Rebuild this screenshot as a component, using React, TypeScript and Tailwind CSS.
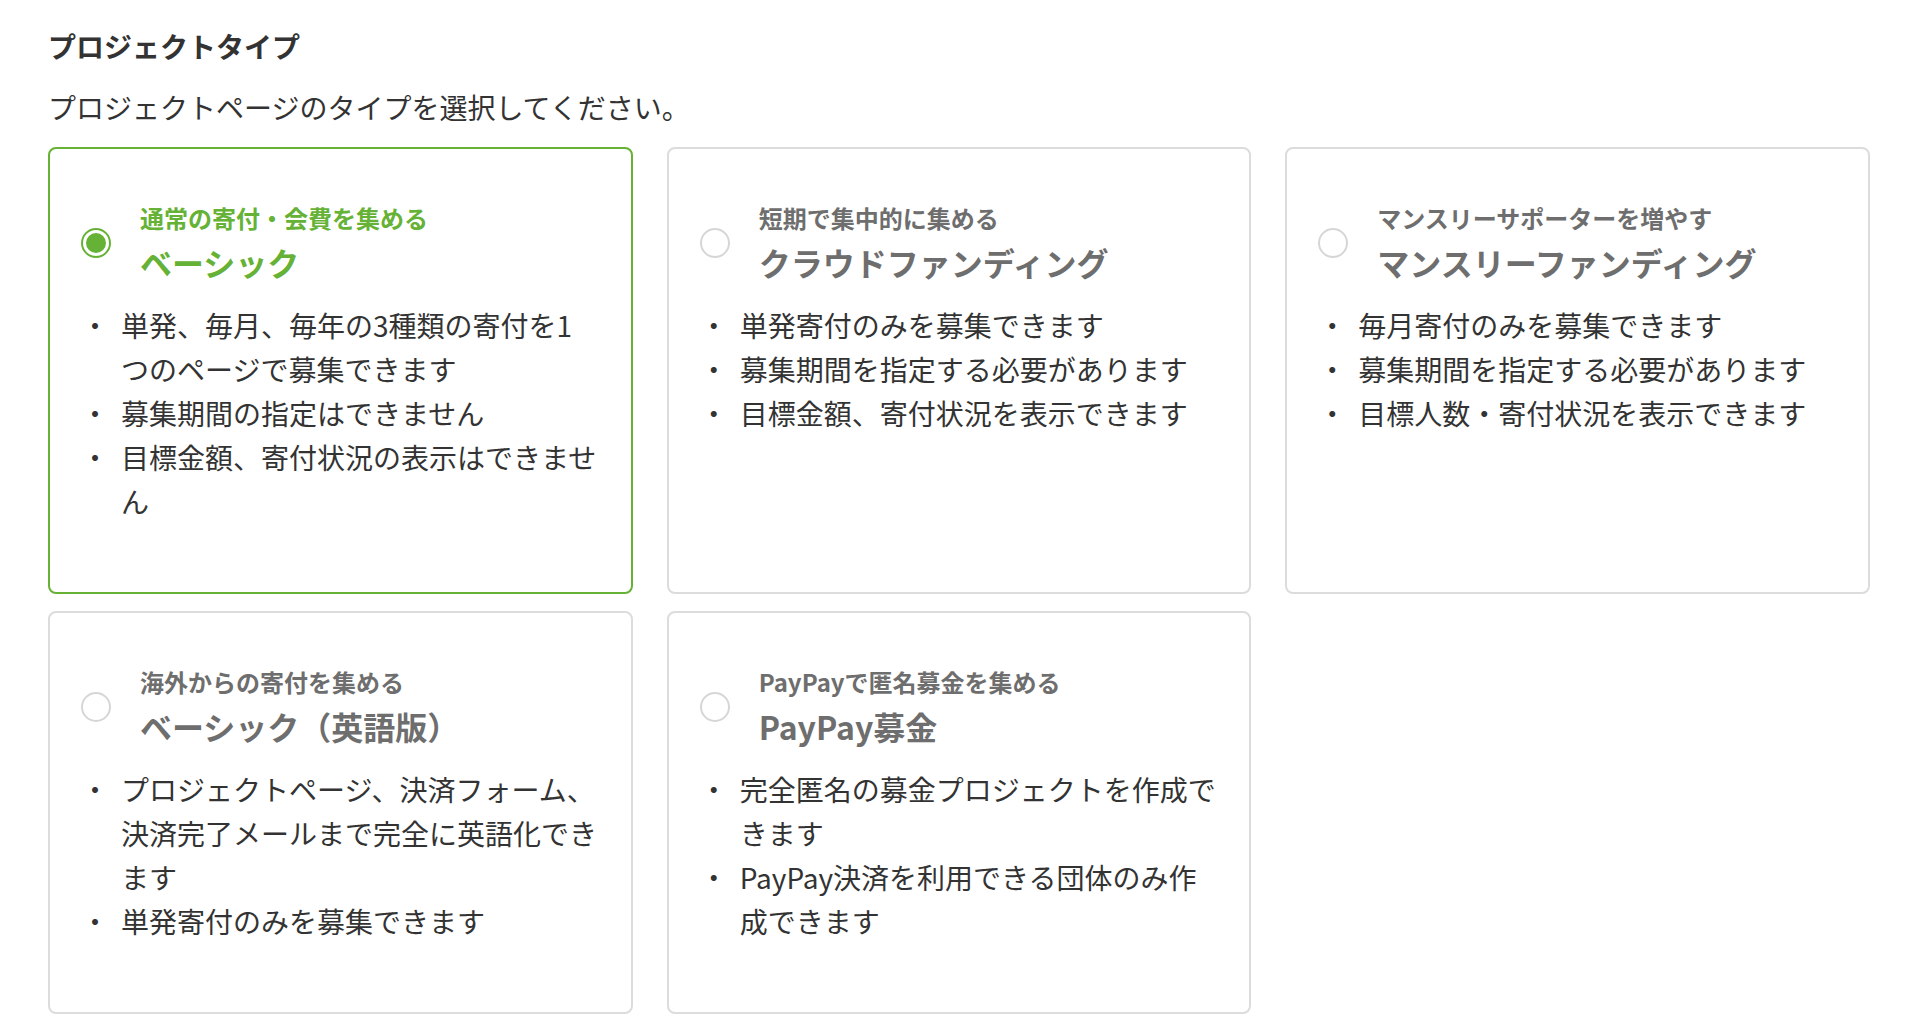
import { useState } from 'react'

type ProjectType = {
  id: string
  lead: string
  title: string
  points: string[]
}

const TYPES: ProjectType[] = [
  {
    id: 'basic',
    lead: '通常の寄付・会費を集める',
    title: 'ベーシック',
    points: [
      '単発、毎月、毎年の3種類の寄付を1\nつのページで募集できます',
      '募集期間の指定はできません',
      '目標金額、寄付状況の表示はできませ\nん',
    ],
  },
  {
    id: 'crowdfunding',
    lead: '短期で集中的に集める',
    title: 'クラウドファンディング',
    points: ['単発寄付のみを募集できます', '募集期間を指定する必要があります', '目標金額、寄付状況を表示できます'],
  },
  {
    id: 'monthly',
    lead: 'マンスリーサポーターを増やす',
    title: 'マンスリーファンディング',
    points: ['毎月寄付のみを募集できます', '募集期間を指定する必要があります', '目標人数・寄付状況を表示できます'],
  },
  {
    id: 'basic-en',
    lead: '海外からの寄付を集める',
    title: 'ベーシック（英語版）',
    points: [
      'プロジェクトページ、決済フォーム、\n決済完了メールまで完全に英語化でき\nます',
      '単発寄付のみを募集できます',
    ],
  },
  {
    id: 'paypay',
    lead: 'PayPayで匿名募金を集める',
    title: 'PayPay募金',
    points: ['完全匿名の募金プロジェクトを作成で\nきます', 'PayPay決済を利用できる団体のみ作\n成できます'],
  },
]

function TypeCard({
  type,
  selected,
  onSelect,
}: {
  type: ProjectType
  selected: boolean
  onSelect: () => void
}) {
  return (
    <div
      role="radio"
      aria-checked={selected}
      onClick={onSelect}
      className={`flex cursor-pointer flex-col rounded-[8px] border-2 bg-white pt-[50px] pr-[20px] pb-[69px] pl-[31px] ${
        selected ? 'border-[#65b236]' : 'border-[#dcdcdc]'
      }`}
    >
      {/* Radio + heading */}
      <div className="flex items-center gap-[29px]">
        <span
          className={`flex h-[30px] w-[30px] shrink-0 items-center justify-center rounded-full border-2 ${
            selected ? 'border-[#65b236]' : 'border-[#d6d6d6]'
          }`}
        >
          {selected && <span className="h-[20px] w-[20px] rounded-full bg-[#65b236]" />}
        </span>
        <div className={`font-bold ${selected ? 'text-[#65b236]' : 'text-[#6e6e6e]'}`}>
          <div className="text-[24px] leading-[38px]">{type.lead}</div>
          <div className="text-[32px] leading-[50px]">{type.title}</div>
        </div>
      </div>

      {/* Points */}
      <ul className="mt-[16px] text-[28px] leading-[44px] text-[#333]">
        {type.points.map((p) => (
          <li key={p} className="flex">
            <span className="w-[40px] shrink-0">・</span>
            <span className="whitespace-pre-line">{p}</span>
          </li>
        ))}
      </ul>
    </div>
  )
}

export default function App() {
  const [selected, setSelected] = useState('basic')

  return (
    <div className="min-h-screen bg-white pt-[24px] pl-[48px] font-['Noto_Sans_CJK_JP',sans-serif] text-[#333]">
      <h2 className="text-[28px] leading-[44px] font-bold">プロジェクトタイプ</h2>
      <p className="mt-[17px] text-[28px] leading-[44px]">プロジェクトページのタイプを選択してください。</p>

      <div className="mt-[18px] grid w-[1822px] grid-cols-3 gap-x-[34px] gap-y-[17px]">
        {TYPES.map((t) => (
          <TypeCard key={t.id} type={t} selected={selected === t.id} onSelect={() => setSelected(t.id)} />
        ))}
      </div>
    </div>
  )
}
